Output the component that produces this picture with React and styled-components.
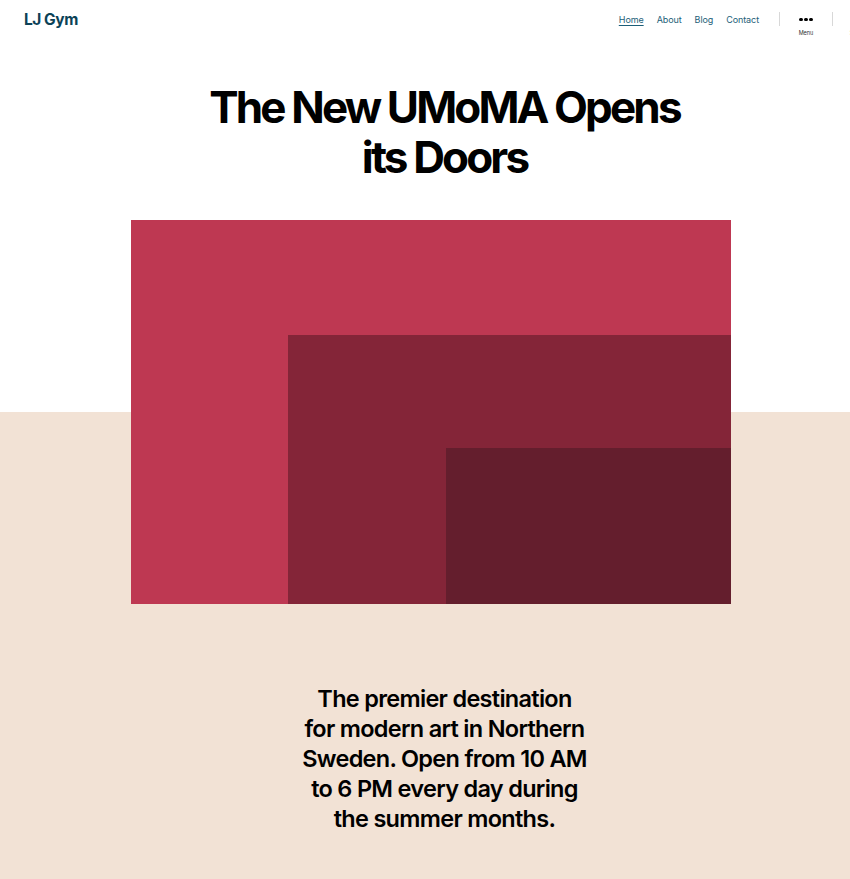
import React from 'react';
import styled, { createGlobalStyle } from 'styled-components';

const GlobalStyle = createGlobalStyle`
    html, body {
        margin: 0;
        padding: 0;
        background: #fff;
        overflow-x: hidden;
    }
    body {
        font-family: Inter, "Liberation Sans", sans-serif;
        color: #000;
    }
`;

const BEIGE = '#f2e2d5';

const Header = styled.header`
    display: flex;
    align-items: flex-start;
    justify-content: space-between;
    height: 40px;
    padding: 0 4px 0 24px;
    width: 889px;
    box-sizing: border-box;
`;

const SiteTitle = styled.a`
    margin-top: 10px;
    font-size: 15.5px;
    line-height: 19px;
    font-weight: 700;
    letter-spacing: -0.03em;
    color: #0c4257;
    text-decoration: none;
`;

const NavArea = styled.div`
    display: flex;
    align-items: flex-start;
    height: 40px;
`;

const NavList = styled.ul`
    display: flex;
    gap: 13px;
    list-style: none;
    margin: 11px 20px 0 0;
    padding: 0;
    line-height: 12px;
`;

const NavLink = styled.a`
    font-size: 9px;
    letter-spacing: -0.01em;
    color: #1c5e78;
    text-decoration: ${props => (props.$active ? 'underline' : 'none')};
    text-underline-offset: 2px;
`;

const Divider = styled.span`
    width: 1px;
    height: 14px;
    background: #d8d8d8;
    margin-top: 12px;
`;

const ToggleButton = styled.button`
    display: flex;
    flex-direction: column;
    align-items: center;
    width: 52px;
    padding: 0;
    margin-top: 15px;
    border: 0;
    background: none;
    font-family: inherit;
    cursor: pointer;
`;

const Dots = styled.span`
    display: flex;
    gap: 1.5px;
    height: 9px;
    align-items: center;
    i {
        width: 3.5px;
        height: 3.5px;
        border-radius: 50%;
        background: #000;
    }
`;

const ToggleLabel = styled.span`
    margin-top: 6px;
    font-size: 5.5px;
    color: #333;
`;

const Title = styled.h1`
    width: 889px;
    margin: 42px 0 38px;
    text-align: center;
    font-size: 44px;
    line-height: 50px;
    font-weight: 700;
    letter-spacing: -0.065em;
    .line {
        display: block;
    }
`;

const Cover = styled.section`
    background: linear-gradient(to bottom, #fff 0, #fff 192px, ${BEIGE} 192px);
    padding-left: 131px;
`;

const Artwork = styled.div`
    display: grid;
    width: 600px;
    height: 384px;
    background: #be3852;
`;

const Block = styled.div`
    margin: ${props => props.$top}px 0 0 ${props => props.$left}px;
    background: ${props => props.$color};
    display: grid;
`;

const Intro = styled.section`
    background: ${BEIGE};
    width: 889px;
    padding: 80px 0 47px;
    min-height: 200px;
`;

const Lead = styled.p`
    width: 287px;
    margin: 0 auto;
    text-align: center;
    font-size: 23.5px;
    line-height: 30px;
    font-weight: 600;
    letter-spacing: -0.03em;
`;

export default function App() {
    const links = ['Home', 'About', 'Blog', 'Contact'];
    return (
        <>
            <GlobalStyle />
            <Header>
                <SiteTitle href="#">LJ Gym</SiteTitle>
                <NavArea>
                    <NavList>
                        {links.map((link, i) => {
                            return (
                                <li key={link}>
                                    <NavLink href="#" $active={i === 0}>
                                        {link}
                                    </NavLink>
                                </li>
                            );
                        })}
                    </NavList>
                    <Divider />
                    <ToggleButton>
                        <Dots>
                            <i />
                            <i />
                            <i />
                        </Dots>
                        <ToggleLabel>Menu</ToggleLabel>
                    </ToggleButton>
                    <Divider />
                    <ToggleButton>
                        <Dots />
                        <ToggleLabel>Search</ToggleLabel>
                    </ToggleButton>
                </NavArea>
            </Header>
            <main>
                <Title>
                    <span className="line">The New UMoMA Opens</span>
                    <span className="line">its Doors</span>
                </Title>
                <Cover>
                    <Artwork>
                        <Block $top={115} $left={157} $color="#842538">
                            <Block $top={113} $left={158} $color="#641e2d" />
                        </Block>
                    </Artwork>
                </Cover>
                <Intro>
                    <Lead>
                        The premier destination for modern art in Northern
                        Sweden. Open from 10 AM to 6 PM every day during the
                        summer months.
                    </Lead>
                </Intro>
            </main>
        </>
    );
}
